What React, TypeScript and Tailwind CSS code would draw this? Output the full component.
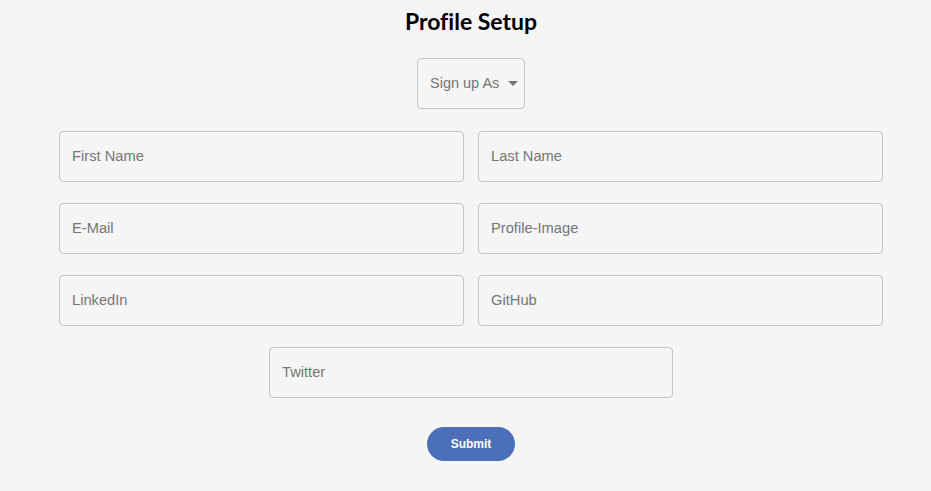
import React from "react";

const inputCls =
  "h-[51px] w-full rounded-[4px] border border-[#c4c4c4] bg-[#f5f5f5] px-[12px] pb-[1px] text-[14.7px] text-[#333] placeholder:text-[#757575] outline-none";

export default function App() {
  return (
    <div
      className="min-h-[491px] w-full bg-[#f5f5f5] pl-[11px]"
      style={{ fontFamily: '"Liberation Sans", Arial, sans-serif' }}
    >
      <div className="flex flex-col items-center pt-[7px]">
        <h1
          className="text-[23px] font-bold leading-[28px] text-black [font-variant-ligatures:none]"
          style={{ fontFamily: 'Lato, "Open Sans", sans-serif' }}
        >
          Profile Setup
        </h1>
        <div className="mt-[23px] flex h-[51px] w-[108px] items-center justify-between rounded-[4px] border border-[#c4c4c4] pl-[12px] pr-[5px]">
          <span className="text-[14.5px] text-[#757575]">Sign up As</span>
          <svg width="10" height="5" viewBox="0 0 10 5" className="mr-[1px]">
            <path d="M0 0 L10 0 L5 5 Z" fill="#757575" />
          </svg>
        </div>
      </div>
      <div className="mx-auto mt-[22px] grid w-[824px] grid-cols-2 gap-x-[14px] gap-y-[21px]">
        <input className={inputCls} placeholder="First Name" />
        <input className={inputCls} placeholder="Last Name" />
        <input className={inputCls} placeholder="E-Mail" />
        <input className={inputCls} placeholder="Profile-Image" />
        <input className={inputCls} placeholder="LinkedIn" />
        <input className={inputCls} placeholder="GitHub" />
      </div>
      <div className="mt-[21px] flex justify-center">
        <div className="w-[404px]">
          <input className={inputCls} placeholder="Twitter" />
        </div>
      </div>
      <div className="mt-[29px] flex justify-center">
        <button className="h-[34px] w-[88px] rounded-full bg-[#4b70b9] text-[12px] font-bold text-white">
          Submit
        </button>
      </div>
    </div>
  );
}
